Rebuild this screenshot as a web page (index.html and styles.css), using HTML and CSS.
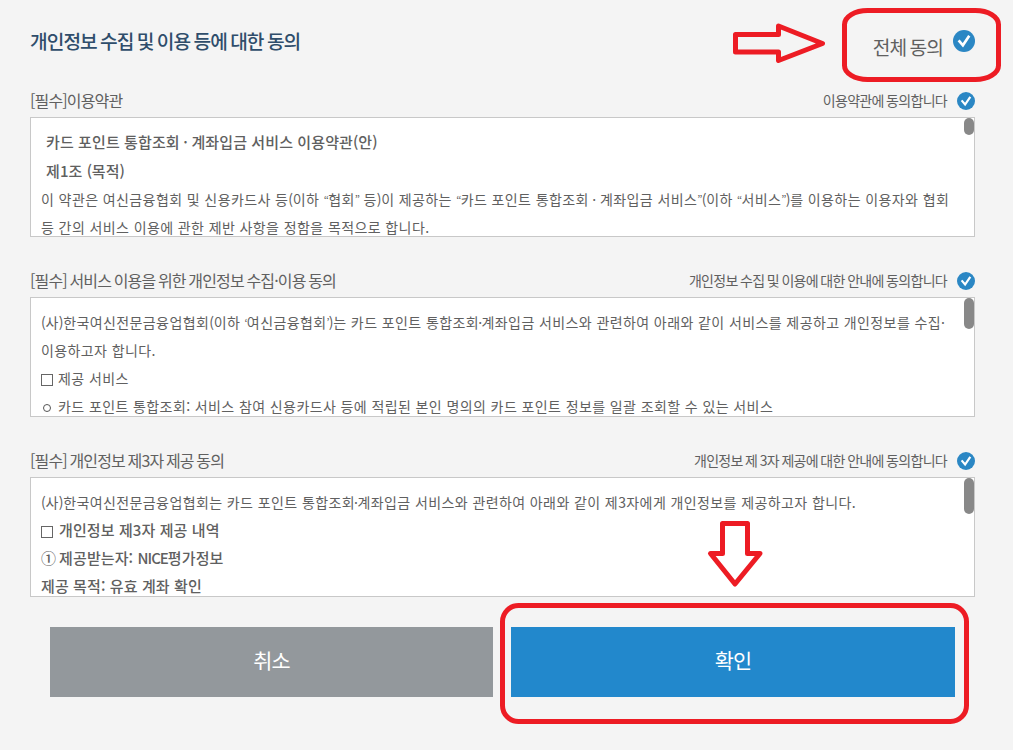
FILE: index.html
```html
<!DOCTYPE html>
<html lang="ko">
<head>
  <meta charset="UTF-8" />
  <meta name="viewport" content="width=device-width, initial-scale=1.0"/>
  <title>개인정보 수집 및 이용 등에 대한 동의</title>
  <link rel="stylesheet" href="styles.css">
</head>
<body>
  <div class="page">
    <div class="header">
      <h1>개인정보 수집 및 이용 등에 대한 동의</h1>
      <label class="agree-all">
        <span>전체 동의</span>
        <svg class="check big" viewBox="0 0 18 18"><circle cx="9" cy="9" r="9"/><path d="M4.6 8.4L8.1 12.5L13.3 4.8"/></svg>
      </label>
    </div>

    <div class="terms">
      <div class="terms-head">
        <h2>[필수]이용약관</h2>
        <label class="agree">
          <span>이용약관에 동의합니다</span>
          <svg class="check" viewBox="0 0 18 18"><circle cx="9" cy="9" r="9"/><path d="M4.6 8.4L8.1 12.5L13.3 4.8"/></svg>
        </label>
      </div>
      <div class="box">
        <div class="text first">
          <p class="bold title">카드 포인트 통합조회 <span class="dot">·</span> 계좌입금 서비스 이용약관(안)</p>
          <p class="bold title">제1조 <span class="paren">(</span>목적)</p>
          <p>이 약관은 여신금융협회 및 신용카드사 등<span class="paren">(</span>이하 <span class="quote">“</span>협회<span class="quote">”</span> 등<span class="paren">)</span>이 제공하는 <span class="quote">“</span>카드 포인트 통합조회 <span class="dot">·</span> 계좌입금 서비스<span class="quote">”</span><span class="paren">(</span>이하 <span class="quote">“</span>서비스<span class="quote">”</span><span class="paren">)</span>를 이용하는 이용자와 협회</p>
          <p>등 간의 서비스 이용에 관한 제반 사항을 정함을 목적으로 합니다.</p>
        </div>
        <div class="thumb short"></div>
      </div>
    </div>

    <div class="terms">
      <div class="terms-head">
        <h2>[필수] 서비스 이용을 위한 개인정보 수집·이용 동의</h2>
        <label class="agree">
          <span>개인정보 수집 및 이용에 대한 안내에 동의합니다</span>
          <svg class="check" viewBox="0 0 18 18"><circle cx="9" cy="9" r="9"/><path d="M4.6 8.4L8.1 12.5L13.3 4.8"/></svg>
        </label>
      </div>
      <div class="box">
        <div class="text">
          <p><span class="paren">(</span>사<span class="paren">)</span>한국여신전문금융업협회<span class="paren">(</span>이하 <span class="quote">‘</span>여신금융협회<span class="quote">’</span><span class="paren">)</span>는 카드 포인트 통합조회<span class="dot">·</span>계좌입금 서비스와 관련하여 아래와 같이 서비스를 제공하고 개인정보를 수집·</p>
          <p>이용하고자 합니다.</p>
          <p><i class="square"></i>제공 서비스</p>
          <p><i class="ring"></i>카드 포인트 통합조회: 서비스 참여 신용카드사 등에 적립된 본인 명의의 카드 포인트 정보를 일괄 조회할 수 있는 서비스</p>
        </div>
        <div class="thumb mid"></div>
      </div>
    </div>

    <div class="terms">
      <div class="terms-head">
        <h2>[필수] 개인정보 제3자 제공 동의</h2>
        <label class="agree">
          <span>개인정보 제 3자 제공에 대한 안내에 동의합니다</span>
          <svg class="check" viewBox="0 0 18 18"><circle cx="9" cy="9" r="9"/><path d="M4.6 8.4L8.1 12.5L13.3 4.8"/></svg>
        </label>
      </div>
      <div class="box">
        <div class="text">
          <p><span class="paren">(</span>사<span class="paren">)</span>한국여신전문금융업협회는 카드 포인트 통합조회<span class="dot">·</span>계좌입금 서비스와 관련하여 아래와 같이 제3자에게 개인정보를 제공하고자 합니다.</p>
          <p class="bold"><i class="square"></i>개인정보 제3자 제공 내역</p>
          <p class="bold"><span class="num">①</span>제공받는자: <span class="en">NICE</span>평가정보</p>
          <p class="bold">제공 목적: 유효 계좌 확인</p>
        </div>
        <div class="thumb long"></div>
      </div>
    </div>

    <div class="buttons">
      <button class="button cancel">취소</button>
      <button class="button ok">확인</button>
    </div>
  </div>

  <!-- red guide marks over the form -->
  <svg class="marks" viewBox="0 0 1013 750">
    <rect x="844.5" y="10.5" width="154" height="69" rx="23" ry="14"/>
    <path d="M735.5 34.5H778.5V26L822.5 43.5L778.5 60.5V52H735.5Z"/>
    <path d="M722.5 523.5H747.5V553.5H760L735 584L710.5 553.5H722.5Z"/>
    <rect x="502.5" y="605.5" width="464" height="116" rx="16"/>
  </svg>
</body>
</html>
```
FILE: styles.css
```css
* {
  margin: 0;
  padding: 0;
  box-sizing: border-box;
}

body {
  background-color: #f4f4f4;
  font-family: "Noto Sans CJK KR", sans-serif;
  color: #606060;
  overflow: hidden;
}

.page {
  width: 1013px;
  height: 750px;
  padding: 0 38px 0 30px;
}

.header {
  display: flex;
  justify-content: space-between;
  height: 87px;
}

h1 {
  padding-top: 26px;
  font-size: 19.2px;
  font-weight: 500;
  line-height: 30px;
  letter-spacing: -0.96px;
  word-spacing: -1.1px;
  color: #2f4d6b;
}

.agree-all {
  display: flex;
  gap: 10px;
  padding-top: 30px;
  font-size: 19.2px;
  line-height: 34px;
  letter-spacing: -0.96px;
  word-spacing: -1px;
}

.check {
  width: 18px;
  height: 18px;
  fill: #2b87c4;
}

.check path {
  fill: none;
  stroke: #fff;
  stroke-width: 2.2;
}

.check.big {
  width: 22px;
  height: 22px;
}

.terms {
  height: 180px;
}

.terms-head {
  display: flex;
  justify-content: space-between;
  height: 30px;
}

h2 {
  font-size: 16px;
  font-weight: 400;
  line-height: 27px;
  letter-spacing: -0.85px;
  word-spacing: -1px;
}

.agree {
  display: flex;
  align-items: center;
  gap: 10px;
  height: 28px;
  font-size: 14px;
  letter-spacing: -0.7px;
  word-spacing: -0.8px;
}

.agree span {
  height: 28px;
  line-height: 26px;
}

.box {
  display: flex;
  justify-content: space-between;
  height: 120px;
  border: 1px solid #c8c8c8;
  background-color: #fff;
  overflow: hidden;
}

.text {
  padding: 10px 0 0 10px;
  font-size: 14px;
  line-height: 28px;
  letter-spacing: 0.4px;
  white-space: nowrap;
}

.text.first {
  padding-top: 9px;
}

.bold {
  font-size: 15px;
  font-weight: 500;
  letter-spacing: 0.1px;
}

.title {
  padding-left: 5px;
  line-height: 29px;
}

/* punctuation is set tighter than the hangul */
.quote {
  font-size: 11px;
  line-height: 1;
  letter-spacing: -0.8px;
}

.paren { letter-spacing: -0.3px; }

.dot {
  margin-left: -0.9px;
  letter-spacing: -0.5px;
}

.en { letter-spacing: -1px; }

.square {
  display: inline-block;
  width: 12px;
  height: 12px;
  margin: 0 5px 0 0;
  border: 1px solid #666;
  vertical-align: -2px;
}

.bold .square {
  margin-right: 6px;
}

.ring {
  display: inline-block;
  width: 8px;
  height: 8px;
  margin: 0 7px 0 2px;
  border: 1px solid #555;
  border-radius: 50%;
}

.num {
  margin-right: 3px;
}

.thumb {
  flex: none;
  width: 10px;
  border-radius: 5px;
  background-color: #888;
}

.short { height: 17px; }
.mid { height: 31px; }
.long { height: 36px; }

.buttons {
  display: flex;
  gap: 18px;
  padding: 0 20px;
}

.button {
  height: 70px;
  padding-bottom: 4px;
  border: none;
  color: #fff;
  font-family: inherit;
  font-size: 20.8px;
  letter-spacing: -0.8px;
  cursor: pointer;
}

.cancel {
  width: 443px;
  background-color: #93989c;
}

.ok {
  width: 444px;
  background-color: #2288cc;
}

.marks {
  position: absolute;
  top: 0;
  left: 0;
  width: 1013px;
  height: 750px;
  fill: none;
  stroke: #ed1c24;
  stroke-width: 5;
  stroke-linejoin: round;
  pointer-events: none;
}
```
